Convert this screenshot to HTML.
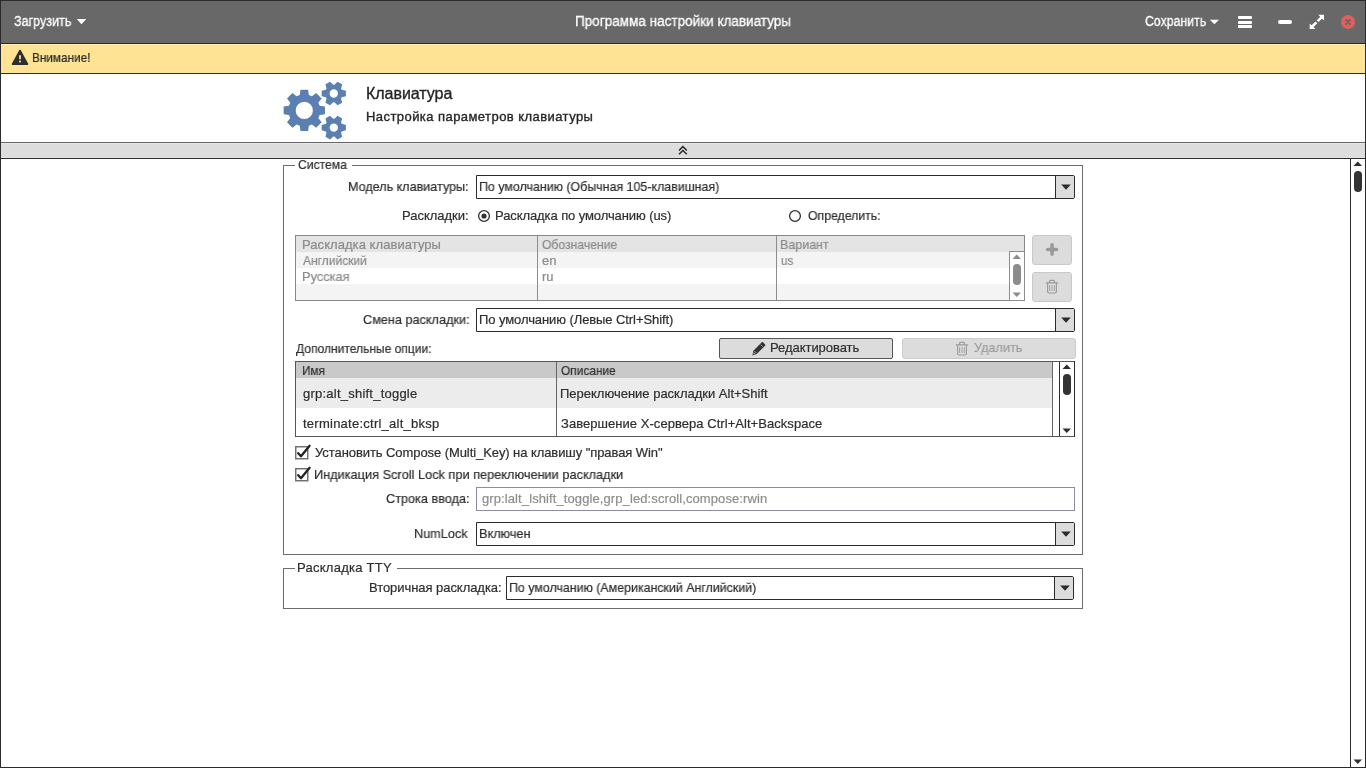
<!DOCTYPE html>
<html><head><meta charset="utf-8"><style>
html,body{margin:0;padding:0;width:1366px;height:768px;overflow:hidden;background:#fff}
body>div,body>svg{position:absolute}
.t{font-family:"Liberation Sans", sans-serif;line-height:20px;white-space:nowrap;will-change:transform}
</style></head><body>
<div style="left:0px;top:0px;width:1366px;height:768px;background:#ffffff;"></div>
<div style="left:0px;top:0px;width:1366px;height:44px;background:#686868;"></div>
<div style="left:0px;top:43px;width:1366px;height:1px;background:#2b2b2b;"></div>
<div style="left:0px;top:44px;width:1366px;height:29px;background:#fee395;"></div>
<div style="left:0px;top:44px;width:1366px;height:1px;background:#fff0ae;"></div>
<div style="left:0px;top:73px;width:1366px;height:1px;background:#2b2b2b;"></div>
<div style="left:0px;top:142px;width:1366px;height:1px;background:#666666;"></div>
<div style="left:0px;top:143px;width:1366px;height:15px;background:#dddddd;"></div>
<div style="left:0px;top:143px;width:1366px;height:1px;background:#e8e8e8;"></div>
<div style="left:0px;top:157px;width:1366px;height:1px;background:#e6e6e6;"></div>
<div style="left:0px;top:158px;width:1366px;height:1px;background:#2b2b2b;"></div>
<div style="left:1350px;top:159px;width:1px;height:608px;background:#2b2b2b;"></div>
<div style="left:0px;top:0px;width:1366px;height:768px;border:1px solid #2b2b2b;background:transparent;box-sizing:border-box;"></div>
<div style="left:283px;top:165px;width:800px;height:390px;border:1px solid #6c6c6c;background:transparent;box-sizing:border-box;"></div>
<div style="left:295px;top:160px;width:57px;height:10px;background:#ffffff;"></div>
<div style="left:476px;top:175px;width:599px;height:24px;border:1px solid #2b2b2b;background:#ffffff;box-sizing:border-box;border-radius:0 2px 2px 0;"></div>
<div style="left:1056px;top:176px;width:18px;height:22px;background:#dcdcdc;border-radius:0 1px 1px 0;"></div>
<div style="left:1055px;top:175px;width:1px;height:24px;background:#2b2b2b;"></div>
<svg style="left:1060.5px;top:184.0px" width="11" height="7"><path d="M0.2 0.5 L9.8 0.5 L5 5.8 Z" fill="#2b2b2b"/></svg>
<svg style="left:477px;top:209px" width="14" height="14"><circle cx="7" cy="7" r="5.4" fill="#fff" stroke="#333" stroke-width="1.3"/><circle cx="7" cy="7" r="2.6" fill="#333"/></svg>
<svg style="left:788px;top:209px" width="14" height="14"><circle cx="7" cy="7" r="5.4" fill="#fff" stroke="#333" stroke-width="1.3"/></svg>
<div style="left:295px;top:235px;width:730px;height:66px;border:1px solid #888888;background:#f4f4f4;box-sizing:border-box;"></div>
<div style="left:296px;top:236px;width:728px;height:16px;background:#e4e4e4;"></div>
<div style="left:296px;top:268px;width:713px;height:16px;background:#ffffff;"></div>
<div style="left:537px;top:236px;width:1px;height:64px;background:#8c8c8c;"></div>
<div style="left:776px;top:236px;width:1px;height:64px;background:#8c8c8c;"></div>
<div style="left:1009px;top:251px;width:16px;height:50px;border:1px solid #8c8c8c;background:#ffffff;box-sizing:border-box;"></div>
<svg style="left:1012px;top:254px" width="10" height="6"><path d="M0.5 5 L9 5 L4.75 0.5 Z" fill="#8c8c8c"/></svg>
<div style="left:1013px;top:264px;width:8px;height:21px;background:#8c8c8c;border-radius:4px;"></div>
<svg style="left:1012px;top:292px" width="10" height="6"><path d="M0.5 0.5 L9 0.5 L4.75 5 Z" fill="#8c8c8c"/></svg>
<div style="left:1032px;top:235px;width:40px;height:30px;border:1px solid #c9c9c9;background:#dcdcdc;box-sizing:border-box;border-radius:3px;"></div>
<svg style="left:1045px;top:242px" width="14" height="15"><path d="M7.05 2.85 V12.15 M2.65 7.5 H11.45" stroke="#999999" stroke-width="3.5" stroke-linecap="round"/></svg>
<div style="left:1032px;top:272px;width:40px;height:30px;border:1px solid #c9c9c9;background:#dcdcdc;box-sizing:border-box;border-radius:3px;"></div>
<svg style="left:1045px;top:279px" width="14" height="15"><path d="M4.6 3.2 V2.2 Q4.6 1.3 5.5 1.3 H8.5 Q9.4 1.3 9.4 2.2 V3.2 M0.8 3.8 H13.2 M2.6 4.2 V12.6 Q2.6 14 4 14 H10 Q11.4 14 11.4 12.6 V4.2" stroke="#9a9a9a" stroke-width="1.15" fill="none"/><path d="M4.6 6.2 V12 M7 6.2 V12 M9.4 6.2 V12" stroke="#9a9a9a" stroke-width="0.9" fill="none"/></svg>
<div style="left:476px;top:308px;width:599px;height:24px;border:1px solid #2b2b2b;background:#ffffff;box-sizing:border-box;border-radius:0 2px 2px 0;"></div>
<div style="left:1056px;top:309px;width:18px;height:22px;background:#dcdcdc;border-radius:0 1px 1px 0;"></div>
<div style="left:1055px;top:308px;width:1px;height:24px;background:#2b2b2b;"></div>
<svg style="left:1060.5px;top:317.0px" width="11" height="7"><path d="M0.2 0.5 L9.8 0.5 L5 5.8 Z" fill="#2b2b2b"/></svg>
<div style="left:719px;top:338px;width:174px;height:21px;border:1px solid #555555;background:#dcdcdc;box-sizing:border-box;border-radius:2px;"></div>
<svg style="left:750px;top:338.5px" width="18" height="18"><g transform="translate(2.4 16.4) scale(0.86) translate(-2.4 -16.4)"><path d="M2.4 16.4 L3.5 11 L13.3 1.2 Q14 0.5 14.7 1.2 L17.2 3.7 Q17.9 4.4 17.2 5.1 L7.4 14.9 Z" fill="#333"/><path d="M4.6 11.3 L7.1 13.8 M12 3.9 L14.5 6.4" stroke="#dcdcdc" stroke-width="0.7"/><path d="M3.4 15.4 L3.9 12.6 L6.2 14.9 Z" fill="#aaa"/></g></svg>
<div style="left:902px;top:338px;width:174px;height:21px;border:1px solid #cdcdcd;background:#dcdcdc;box-sizing:border-box;border-radius:3px;"></div>
<svg style="left:955px;top:341px" width="14" height="15"><path d="M4.6 3.2 V2.2 Q4.6 1.3 5.5 1.3 H8.5 Q9.4 1.3 9.4 2.2 V3.2 M0.8 3.8 H13.2 M2.6 4.2 V12.6 Q2.6 14 4 14 H10 Q11.4 14 11.4 12.6 V4.2" stroke="#9c9c9c" stroke-width="1.15" fill="none"/><path d="M4.6 6.2 V12 M7 6.2 V12 M9.4 6.2 V12" stroke="#9c9c9c" stroke-width="0.9" fill="none"/></svg>
<div style="left:295px;top:361px;width:780px;height:76px;border:1px solid #555555;background:#ffffff;box-sizing:border-box;"></div>
<div style="left:296px;top:362px;width:756px;height:16px;background:#c9c9c9;"></div>
<div style="left:296px;top:378px;width:756px;height:30px;background:#ececec;"></div>
<div style="left:556px;top:362px;width:1px;height:74px;background:#666666;"></div>
<div style="left:1052px;top:362px;width:1px;height:74px;background:#666666;"></div>
<div style="left:1059px;top:362px;width:1px;height:74px;background:#2b2b2b;"></div>
<div style="left:1074px;top:361px;width:1px;height:76px;background:#2b2b2b;"></div>
<svg style="left:1062px;top:364px" width="10" height="6"><path d="M0.5 5 L9 5 L4.75 0.5 Z" fill="#2e2e2e"/></svg>
<div style="left:1063px;top:374px;width:8px;height:21px;background:#333333;border-radius:4px;"></div>
<svg style="left:1062px;top:428px" width="10" height="6"><path d="M0.5 0.5 L9 0.5 L4.75 5 Z" fill="#2e2e2e"/></svg>
<svg style="left:295px;top:443px" width="18" height="17"><rect x="0.75" y="3.75" width="12" height="12" fill="none" stroke="#6a6a6a" stroke-width="1.4"/><path d="M3.2 10.2 L6 13.2 L14.6 2.8" stroke="#222" stroke-width="2.3" fill="none" stroke-linecap="round" stroke-linejoin="round"/></svg>
<svg style="left:295px;top:465px" width="18" height="17"><rect x="0.75" y="3.75" width="12" height="12" fill="none" stroke="#6a6a6a" stroke-width="1.4"/><path d="M3.2 10.2 L6 13.2 L14.6 2.8" stroke="#222" stroke-width="2.3" fill="none" stroke-linecap="round" stroke-linejoin="round"/></svg>
<div style="left:476px;top:487px;width:599px;height:24px;border:1px solid #8e8ca0;background:#ffffff;box-sizing:border-box;"></div>
<div style="left:476px;top:522px;width:599px;height:24px;border:1px solid #2b2b2b;background:#ffffff;box-sizing:border-box;border-radius:0 2px 2px 0;"></div>
<div style="left:1056px;top:523px;width:18px;height:22px;background:#dcdcdc;border-radius:0 1px 1px 0;"></div>
<div style="left:1055px;top:522px;width:1px;height:24px;background:#2b2b2b;"></div>
<svg style="left:1060.5px;top:531.0px" width="11" height="7"><path d="M0.2 0.5 L9.8 0.5 L5 5.8 Z" fill="#2b2b2b"/></svg>
<div style="left:283px;top:568px;width:800px;height:41px;border:1px solid #6c6c6c;background:transparent;box-sizing:border-box;"></div>
<div style="left:295px;top:562px;width:102px;height:10px;background:#ffffff;"></div>
<div style="left:506px;top:576px;width:568px;height:24px;border:1px solid #2b2b2b;background:#ffffff;box-sizing:border-box;border-radius:0 2px 2px 0;"></div>
<div style="left:1055px;top:577px;width:18px;height:22px;background:#dcdcdc;border-radius:0 1px 1px 0;"></div>
<div style="left:1054px;top:576px;width:1px;height:24px;background:#2b2b2b;"></div>
<svg style="left:1059.5px;top:585.0px" width="11" height="7"><path d="M0.2 0.5 L9.8 0.5 L5 5.8 Z" fill="#2b2b2b"/></svg>
<svg style="left:1353px;top:161px" width="10" height="6"><path d="M0.5 5 L9 5 L4.75 0.5 Z" fill="#2e2e2e"/></svg>
<div style="left:1354px;top:171px;width:8px;height:21px;background:#333333;border-radius:4px;"></div>
<svg style="left:1353px;top:759px" width="10" height="6"><path d="M0.5 0.5 L9 0.5 L4.75 5 Z" fill="#2e2e2e"/></svg>
<svg style="left:676px;top:144px" width="14" height="13"><path d="M3 6.5 L6.9 2.6 L10.8 6.5 M3 10.25 L6.9 6.5 L10.8 10.25" stroke="#2b2b2b" stroke-width="1.5" fill="none"/></svg>
<svg style="left:76px;top:18px" width="12" height="8"><path d="M0.8 0.9 L10.2 0.9 L5.5 6.2 Z" fill="#fff"/></svg>
<svg style="left:1209px;top:19px" width="12" height="8"><path d="M0.8 0.7 L10 0.7 L5.4 5.2 Z" fill="#fff"/></svg>
<div style="left:1238px;top:16px;width:14px;height:3px;background:#ffffff;border-radius:1px;"></div>
<div style="left:1238px;top:21px;width:14px;height:3px;background:#ffffff;border-radius:1px;"></div>
<div style="left:1238px;top:25px;width:14px;height:3px;background:#ffffff;border-radius:1px;"></div>
<div style="left:1278px;top:20px;width:14px;height:4px;background:#ffffff;border-radius:2px;"></div>
<svg style="left:1308px;top:13px" width="18" height="18"><path d="M10.2 1.8 H16 V7.4 Z M1.7 10.5 V16 H7.4 Z" fill="#fff"/><path d="M14 3.8 L9.6 8.2 M8.4 9.4 L3.7 14" stroke="#fff" stroke-width="2.5"/></svg>
<svg style="left:1341px;top:15px" width="14" height="14"><circle cx="7" cy="7" r="7" fill="#e06060"/><path d="M5 5 L9 9 M9 5 L5 9" stroke="#686868" stroke-width="2" stroke-linecap="round"/></svg>
<svg style="left:11px;top:49px" width="19" height="17"><path d="M9 1.5 L1.5 15.2 H16.5 Z" fill="#2e2e2e" stroke="#2e2e2e" stroke-width="1.6" stroke-linejoin="round"/><path d="M9 6.2 V10.3" stroke="#fde398" stroke-width="1.8"/><rect x="8.1" y="11.6" width="1.8" height="1.8" fill="#fde398"/></svg>
<svg style="left:270px;top:70px" width="90" height="80"><path d="M49.64 35.86 L54.95 36.57 L54.95 44.23 L49.64 44.94 L48.36 48.03 L51.61 52.29 L46.19 57.71 L41.93 54.46 L38.84 55.74 L38.13 61.05 L30.47 61.05 L29.76 55.74 L26.67 54.46 L22.41 57.71 L16.99 52.29 L20.24 48.03 L18.96 44.94 L13.65 44.23 L13.65 36.57 L18.96 35.86 L20.24 32.77 L16.99 28.51 L22.41 23.09 L26.67 26.34 L29.76 25.06 L30.47 19.75 L38.13 19.75 L38.84 25.06 L41.93 26.34 L46.19 23.09 L51.61 28.51 L48.36 32.77 Z M42.90 40.40 A8.6 8.6 0 1 0 25.70 40.40 A8.6 8.6 0 1 0 42.90 40.40 Z M71.71 19.64 L75.91 20.82 L75.91 26.18 L71.71 27.36 L71.10 28.42 L72.18 32.64 L67.53 35.33 L64.41 32.28 L63.19 32.28 L60.07 35.33 L55.42 32.64 L56.50 28.42 L55.89 27.36 L51.69 26.18 L51.69 20.82 L55.89 19.64 L56.50 18.58 L55.42 14.36 L60.07 11.67 L63.19 14.72 L64.41 14.72 L67.53 11.67 L72.18 14.36 L71.10 18.58 Z M68.00 23.50 A4.2 4.2 0 1 0 59.60 23.50 A4.2 4.2 0 1 0 68.00 23.50 Z M71.71 53.74 L75.91 54.92 L75.91 60.28 L71.71 61.46 L71.10 62.52 L72.18 66.74 L67.53 69.43 L64.41 66.38 L63.19 66.38 L60.07 69.43 L55.42 66.74 L56.50 62.52 L55.89 61.46 L51.69 60.28 L51.69 54.92 L55.89 53.74 L56.50 52.68 L55.42 48.46 L60.07 45.77 L63.19 48.82 L64.41 48.82 L67.53 45.77 L72.18 48.46 L71.10 52.68 Z M68.00 57.60 A4.2 4.2 0 1 0 59.60 57.60 A4.2 4.2 0 1 0 68.00 57.60 Z" fill="#5b7fb1" fill-rule="evenodd"/></svg>
<div class="t" style="left:14.00px;top:11px;font-size:14px;font-weight:400;color:#ffffff;letter-spacing:0.000px;-webkit-text-stroke:0.30px #ffffff;transform:scaleX(0.8958);transform-origin:0 0;">Загрузить</div>
<div class="t" style="left:574.63px;top:11px;font-size:14px;font-weight:400;color:#ffffff;letter-spacing:0.000px;-webkit-text-stroke:0.30px #ffffff;transform:scaleX(0.9660);transform-origin:0 0;">Программа настройки клавиатуры</div>
<div class="t" style="left:1145.20px;top:11px;font-size:14px;font-weight:400;color:#ffffff;letter-spacing:0.000px;-webkit-text-stroke:0.30px #ffffff;transform:scaleX(0.8805);transform-origin:0 0;">Сохранить</div>
<div class="t" style="left:31.59px;top:48px;font-size:13px;font-weight:400;color:#262626;letter-spacing:0.000px;-webkit-text-stroke:0.20px #262626;transform:scaleX(0.9055);transform-origin:0 0;">Внимание!</div>
<div class="t" style="left:365.60px;top:84px;font-size:16px;font-weight:400;color:#262626;letter-spacing:-0.041px;-webkit-text-stroke:0.35px #262626;">Клавиатура</div>
<div class="t" style="left:365.70px;top:107px;font-size:13px;font-weight:400;color:#262626;letter-spacing:0.438px;-webkit-text-stroke:0.35px #262626;">Настройка параметров клавиатуры</div>
<div class="t" style="left:298.20px;top:155px;font-size:13px;font-weight:400;color:#2e2e2e;letter-spacing:0.000px;-webkit-text-stroke:0.20px #2e2e2e;transform:scaleX(0.9318);transform-origin:0 0;">Система</div>
<div class="t" style="left:348.13px;top:177px;font-size:13px;font-weight:400;color:#2e2e2e;letter-spacing:0.000px;-webkit-text-stroke:0.20px #2e2e2e;transform:scaleX(0.9670);transform-origin:0 0;">Модель клавиатуры:</div>
<div class="t" style="left:478.95px;top:177px;font-size:13px;font-weight:400;color:#2e2e2e;letter-spacing:0.000px;-webkit-text-stroke:0.20px #2e2e2e;transform:scaleX(0.9548);transform-origin:0 0;">По умолчанию (Обычная 105-клавишная)</div>
<div class="t" style="left:402.40px;top:206px;font-size:13px;font-weight:400;color:#2e2e2e;letter-spacing:-0.017px;-webkit-text-stroke:0.20px #2e2e2e;">Раскладки:</div>
<div class="t" style="left:495.30px;top:206px;font-size:13px;font-weight:400;color:#2e2e2e;letter-spacing:-0.088px;-webkit-text-stroke:0.20px #2e2e2e;">Раскладка по умолчанию (us)</div>
<div class="t" style="left:807.90px;top:206px;font-size:13px;font-weight:400;color:#2e2e2e;letter-spacing:0.000px;-webkit-text-stroke:0.20px #2e2e2e;transform:scaleX(0.9438);transform-origin:0 0;">Определить:</div>
<div class="t" style="left:301.60px;top:235px;font-size:13px;font-weight:400;color:#8a8a8a;letter-spacing:0.060px;-webkit-text-stroke:0.20px #8a8a8a;">Раскладка клавиатуры</div>
<div class="t" style="left:541.50px;top:235px;font-size:13px;font-weight:400;color:#8a8a8a;letter-spacing:0.000px;-webkit-text-stroke:0.20px #8a8a8a;transform:scaleX(0.9355);transform-origin:0 0;">Обозначение</div>
<div class="t" style="left:779.54px;top:235px;font-size:13px;font-weight:400;color:#8a8a8a;letter-spacing:0.000px;-webkit-text-stroke:0.20px #8a8a8a;transform:scaleX(0.9598);transform-origin:0 0;">Вариант</div>
<div class="t" style="left:302.60px;top:251px;font-size:13px;font-weight:400;color:#8a8a8a;letter-spacing:0.000px;-webkit-text-stroke:0.20px #8a8a8a;transform:scaleX(0.9236);transform-origin:0 0;">Английский</div>
<div class="t" style="left:541.50px;top:251px;font-size:13px;font-weight:400;color:#8a8a8a;letter-spacing:0.000px;-webkit-text-stroke:0.20px #8a8a8a;">en</div>
<div class="t" style="left:780.50px;top:251px;font-size:13px;font-weight:400;color:#8a8a8a;letter-spacing:0.000px;-webkit-text-stroke:0.20px #8a8a8a;transform:scaleX(0.8855);transform-origin:0 0;">us</div>
<div class="t" style="left:301.62px;top:267px;font-size:13px;font-weight:400;color:#8a8a8a;letter-spacing:0.000px;-webkit-text-stroke:0.20px #8a8a8a;transform:scaleX(0.9846);transform-origin:0 0;">Русская</div>
<div class="t" style="left:541.50px;top:267px;font-size:13px;font-weight:400;color:#8a8a8a;letter-spacing:0.000px;-webkit-text-stroke:0.20px #8a8a8a;">ru</div>
<div class="t" style="left:362.60px;top:310px;font-size:13px;font-weight:400;color:#2e2e2e;letter-spacing:0.000px;-webkit-text-stroke:0.20px #2e2e2e;transform:scaleX(0.9750);transform-origin:0 0;">Смена раскладки:</div>
<div class="t" style="left:479.30px;top:310px;font-size:13px;font-weight:400;color:#2e2e2e;letter-spacing:-0.084px;-webkit-text-stroke:0.20px #2e2e2e;">По умолчанию (Левые Ctrl+Shift)</div>
<div class="t" style="left:295.90px;top:339px;font-size:13px;font-weight:400;color:#2e2e2e;letter-spacing:0.000px;-webkit-text-stroke:0.20px #2e2e2e;transform:scaleX(0.9262);transform-origin:0 0;">Дополнительные опции:</div>
<div class="t" style="left:769.60px;top:338px;font-size:13px;font-weight:400;color:#2e2e2e;letter-spacing:-0.044px;-webkit-text-stroke:0.20px #2e2e2e;">Редактировать</div>
<div class="t" style="left:973.60px;top:338px;font-size:13px;font-weight:400;color:#9c9c9c;letter-spacing:0.000px;-webkit-text-stroke:0.20px #9c9c9c;transform:scaleX(0.9767);transform-origin:0 0;">Удалить</div>
<div class="t" style="left:301.69px;top:361px;font-size:13px;font-weight:400;color:#2e2e2e;letter-spacing:0.000px;-webkit-text-stroke:0.20px #2e2e2e;transform:scaleX(0.9060);transform-origin:0 0;">Имя</div>
<div class="t" style="left:560.80px;top:361px;font-size:13px;font-weight:400;color:#2e2e2e;letter-spacing:0.000px;-webkit-text-stroke:0.20px #2e2e2e;transform:scaleX(0.9147);transform-origin:0 0;">Описание</div>
<div class="t" style="left:302.60px;top:384px;font-size:13px;font-weight:400;color:#2e2e2e;letter-spacing:0.230px;-webkit-text-stroke:0.20px #2e2e2e;">grp:alt_shift_toggle</div>
<div class="t" style="left:559.80px;top:384px;font-size:13px;font-weight:400;color:#2e2e2e;letter-spacing:-0.004px;-webkit-text-stroke:0.20px #2e2e2e;">Переключение раскладки Alt+Shift</div>
<div class="t" style="left:302.60px;top:414px;font-size:13px;font-weight:400;color:#2e2e2e;letter-spacing:0.248px;-webkit-text-stroke:0.20px #2e2e2e;">terminate:ctrl_alt_bksp</div>
<div class="t" style="left:560.80px;top:414px;font-size:13px;font-weight:400;color:#2e2e2e;letter-spacing:0.047px;-webkit-text-stroke:0.20px #2e2e2e;">Завершение X-сервера Ctrl+Alt+Backspace</div>
<div class="t" style="left:315.40px;top:443px;font-size:13px;font-weight:400;color:#2e2e2e;letter-spacing:-0.075px;-webkit-text-stroke:0.20px #2e2e2e;">Установить Compose (Multi_Key) на клавишу &quot;правая Win&quot;</div>
<div class="t" style="left:314.42px;top:465px;font-size:13px;font-weight:400;color:#2e2e2e;letter-spacing:0.000px;-webkit-text-stroke:0.20px #2e2e2e;transform:scaleX(0.9807);transform-origin:0 0;">Индикация Scroll Lock при переключении раскладки</div>
<div class="t" style="left:385.50px;top:489px;font-size:13px;font-weight:400;color:#2e2e2e;letter-spacing:0.000px;-webkit-text-stroke:0.20px #2e2e2e;transform:scaleX(0.9760);transform-origin:0 0;">Строка ввода:</div>
<div class="t" style="left:481.50px;top:489px;font-size:13px;font-weight:400;color:#8d8d8d;letter-spacing:0.099px;-webkit-text-stroke:0.20px #8d8d8d;">grp:lalt_lshift_toggle,grp_led:scroll,compose:rwin</div>
<div class="t" style="left:413.63px;top:524px;font-size:13px;font-weight:400;color:#2e2e2e;letter-spacing:0.000px;-webkit-text-stroke:0.20px #2e2e2e;transform:scaleX(0.9741);transform-origin:0 0;">NumLock</div>
<div class="t" style="left:479.02px;top:524px;font-size:13px;font-weight:400;color:#2e2e2e;letter-spacing:0.000px;-webkit-text-stroke:0.20px #2e2e2e;transform:scaleX(0.9795);transform-origin:0 0;">Включен</div>
<div class="t" style="left:297.20px;top:558px;font-size:13px;font-weight:400;color:#2e2e2e;letter-spacing:0.258px;-webkit-text-stroke:0.20px #2e2e2e;">Раскладка TTY</div>
<div class="t" style="left:368.70px;top:578px;font-size:13px;font-weight:400;color:#2e2e2e;letter-spacing:-0.053px;-webkit-text-stroke:0.20px #2e2e2e;">Вторичная раскладка:</div>
<div class="t" style="left:509.25px;top:578px;font-size:13px;font-weight:400;color:#2e2e2e;letter-spacing:0.000px;-webkit-text-stroke:0.20px #2e2e2e;transform:scaleX(0.9534);transform-origin:0 0;">По умолчанию (Американский Английский)</div>
</body></html>
